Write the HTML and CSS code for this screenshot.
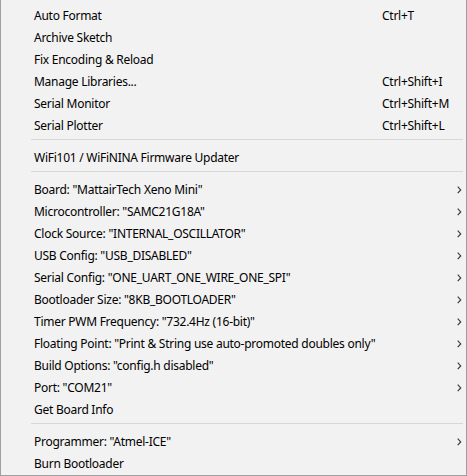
FILE: index.html
```html
<!DOCTYPE html>
<html>
<head>
<meta charset="utf-8">
<link rel="stylesheet" href="styles.css">
</head>
<body>
<div class="menu">
  <div class="row"><span class="label">Auto Format</span><span class="key">Ctrl+T</span><span class="arrow"></span></div>
  <div class="row"><span class="label">Archive Sketch</span><span class="key"></span><span class="arrow"></span></div>
  <div class="row"><span class="label">Fix Encoding &amp; Reload</span><span class="key"></span><span class="arrow"></span></div>
  <div class="row"><span class="label">Manage Libraries...</span><span class="key">Ctrl+Shift+I</span><span class="arrow"></span></div>
  <div class="row"><span class="label">Serial Monitor</span><span class="key">Ctrl+Shift+M</span><span class="arrow"></span></div>
  <div class="row"><span class="label">Serial Plotter</span><span class="key">Ctrl+Shift+L</span><span class="arrow"></span></div>
  <div class="sep"></div>
  <div class="row"><span class="label">WiFi101 / WiFiNINA Firmware Updater</span><span class="key"></span><span class="arrow"></span></div>
  <div class="sep"></div>
  <div class="row"><span class="label">Board: "MattairTech Xeno Mini"</span><span class="key"></span><span class="arrow"><svg width="5" height="8" viewBox="0 0 5 8"><polyline points="0.7,0.7 3.7,3.9 0.7,7.1" /></svg></span></div>
  <div class="row"><span class="label">Microcontroller: "SAMC21G18A"</span><span class="key"></span><span class="arrow"><svg width="5" height="8" viewBox="0 0 5 8"><polyline points="0.7,0.7 3.7,3.9 0.7,7.1" /></svg></span></div>
  <div class="row"><span class="label">Clock Source: "INTERNAL_OSCILLATOR"</span><span class="key"></span><span class="arrow"><svg width="5" height="8" viewBox="0 0 5 8"><polyline points="0.7,0.7 3.7,3.9 0.7,7.1" /></svg></span></div>
  <div class="row"><span class="label">USB Config: "USB_DISABLED"</span><span class="key"></span><span class="arrow"><svg width="5" height="8" viewBox="0 0 5 8"><polyline points="0.7,0.7 3.7,3.9 0.7,7.1" /></svg></span></div>
  <div class="row"><span class="label">Serial Config: "ONE_UART_ONE_WIRE_ONE_SPI"</span><span class="key"></span><span class="arrow"><svg width="5" height="8" viewBox="0 0 5 8"><polyline points="0.7,0.7 3.7,3.9 0.7,7.1" /></svg></span></div>
  <div class="row"><span class="label">Bootloader Size: "8KB_BOOTLOADER"</span><span class="key"></span><span class="arrow"><svg width="5" height="8" viewBox="0 0 5 8"><polyline points="0.7,0.7 3.7,3.9 0.7,7.1" /></svg></span></div>
  <div class="row"><span class="label">Timer PWM Frequency: "732.4Hz (16-bit)"</span><span class="key"></span><span class="arrow"><svg width="5" height="8" viewBox="0 0 5 8"><polyline points="0.7,0.7 3.7,3.9 0.7,7.1" /></svg></span></div>
  <div class="row"><span class="label">Floating Point: "Print &amp; String use auto-promoted doubles only"</span><span class="key"></span><span class="arrow"><svg width="5" height="8" viewBox="0 0 5 8"><polyline points="0.7,0.7 3.7,3.9 0.7,7.1" /></svg></span></div>
  <div class="row"><span class="label">Build Options: "config.h disabled"</span><span class="key"></span><span class="arrow"><svg width="5" height="8" viewBox="0 0 5 8"><polyline points="0.7,0.7 3.7,3.9 0.7,7.1" /></svg></span></div>
  <div class="row"><span class="label">Port: "COM21"</span><span class="key"></span><span class="arrow"><svg width="5" height="8" viewBox="0 0 5 8"><polyline points="0.7,0.7 3.7,3.9 0.7,7.1" /></svg></span></div>
  <div class="row"><span class="label">Get Board Info</span><span class="key"></span><span class="arrow"></span></div>
  <div class="sep"></div>
  <div class="row"><span class="label">Programmer: "Atmel-ICE"</span><span class="key"></span><span class="arrow"><svg width="5" height="8" viewBox="0 0 5 8"><polyline points="0.7,0.7 3.7,3.9 0.7,7.1" /></svg></span></div>
  <div class="row"><span class="label">Burn Bootloader</span><span class="key"></span><span class="arrow"></span></div>
</div>
</body>
</html>
```

FILE: styles.css
```css
html, body {
  margin: 0;
  padding: 0;
  background: #f2f2f2;
}

.menu {
  width: 467px;
  height: 476px;
  box-sizing: border-box;
  background: #f2f2f2;
  border-left: 1px solid #a0a0a0;
  border-right: 1px solid #a0a0a0;
  border-bottom: 1px solid #a0a0a0;
  padding: 3px 0 2px 0;
  font-family: "Noto Sans", "Open Sans", sans-serif;
  font-size: 12px;
  letter-spacing: -0.26px;
  color: #000;
}

.row {
  display: grid;
  grid-template-columns: 348px 75px 1fr;
  height: 22px;
  align-items: center;
  padding-left: 33px;
  white-space: nowrap;
}

.label, .key {
  line-height: 22px;
  padding-top: 2px;
}

.arrow {
  display: flex;
  align-items: center;
  height: 22px;
}

.arrow svg {
  display: block;
  margin-top: 1px;
}

.arrow polyline {
  fill: none;
  stroke: #3c3c3c;
  stroke-width: 1.2;
}

.sep {
  height: 10px;
  display: flex;
  align-items: center;
  padding-left: 30px;
  padding-right: 3px;
}

.sep::before {
  content: "";
  display: block;
  flex: 1;
  height: 1px;
  background: #d7d7d7;
  margin-top: -1px;
}
```
